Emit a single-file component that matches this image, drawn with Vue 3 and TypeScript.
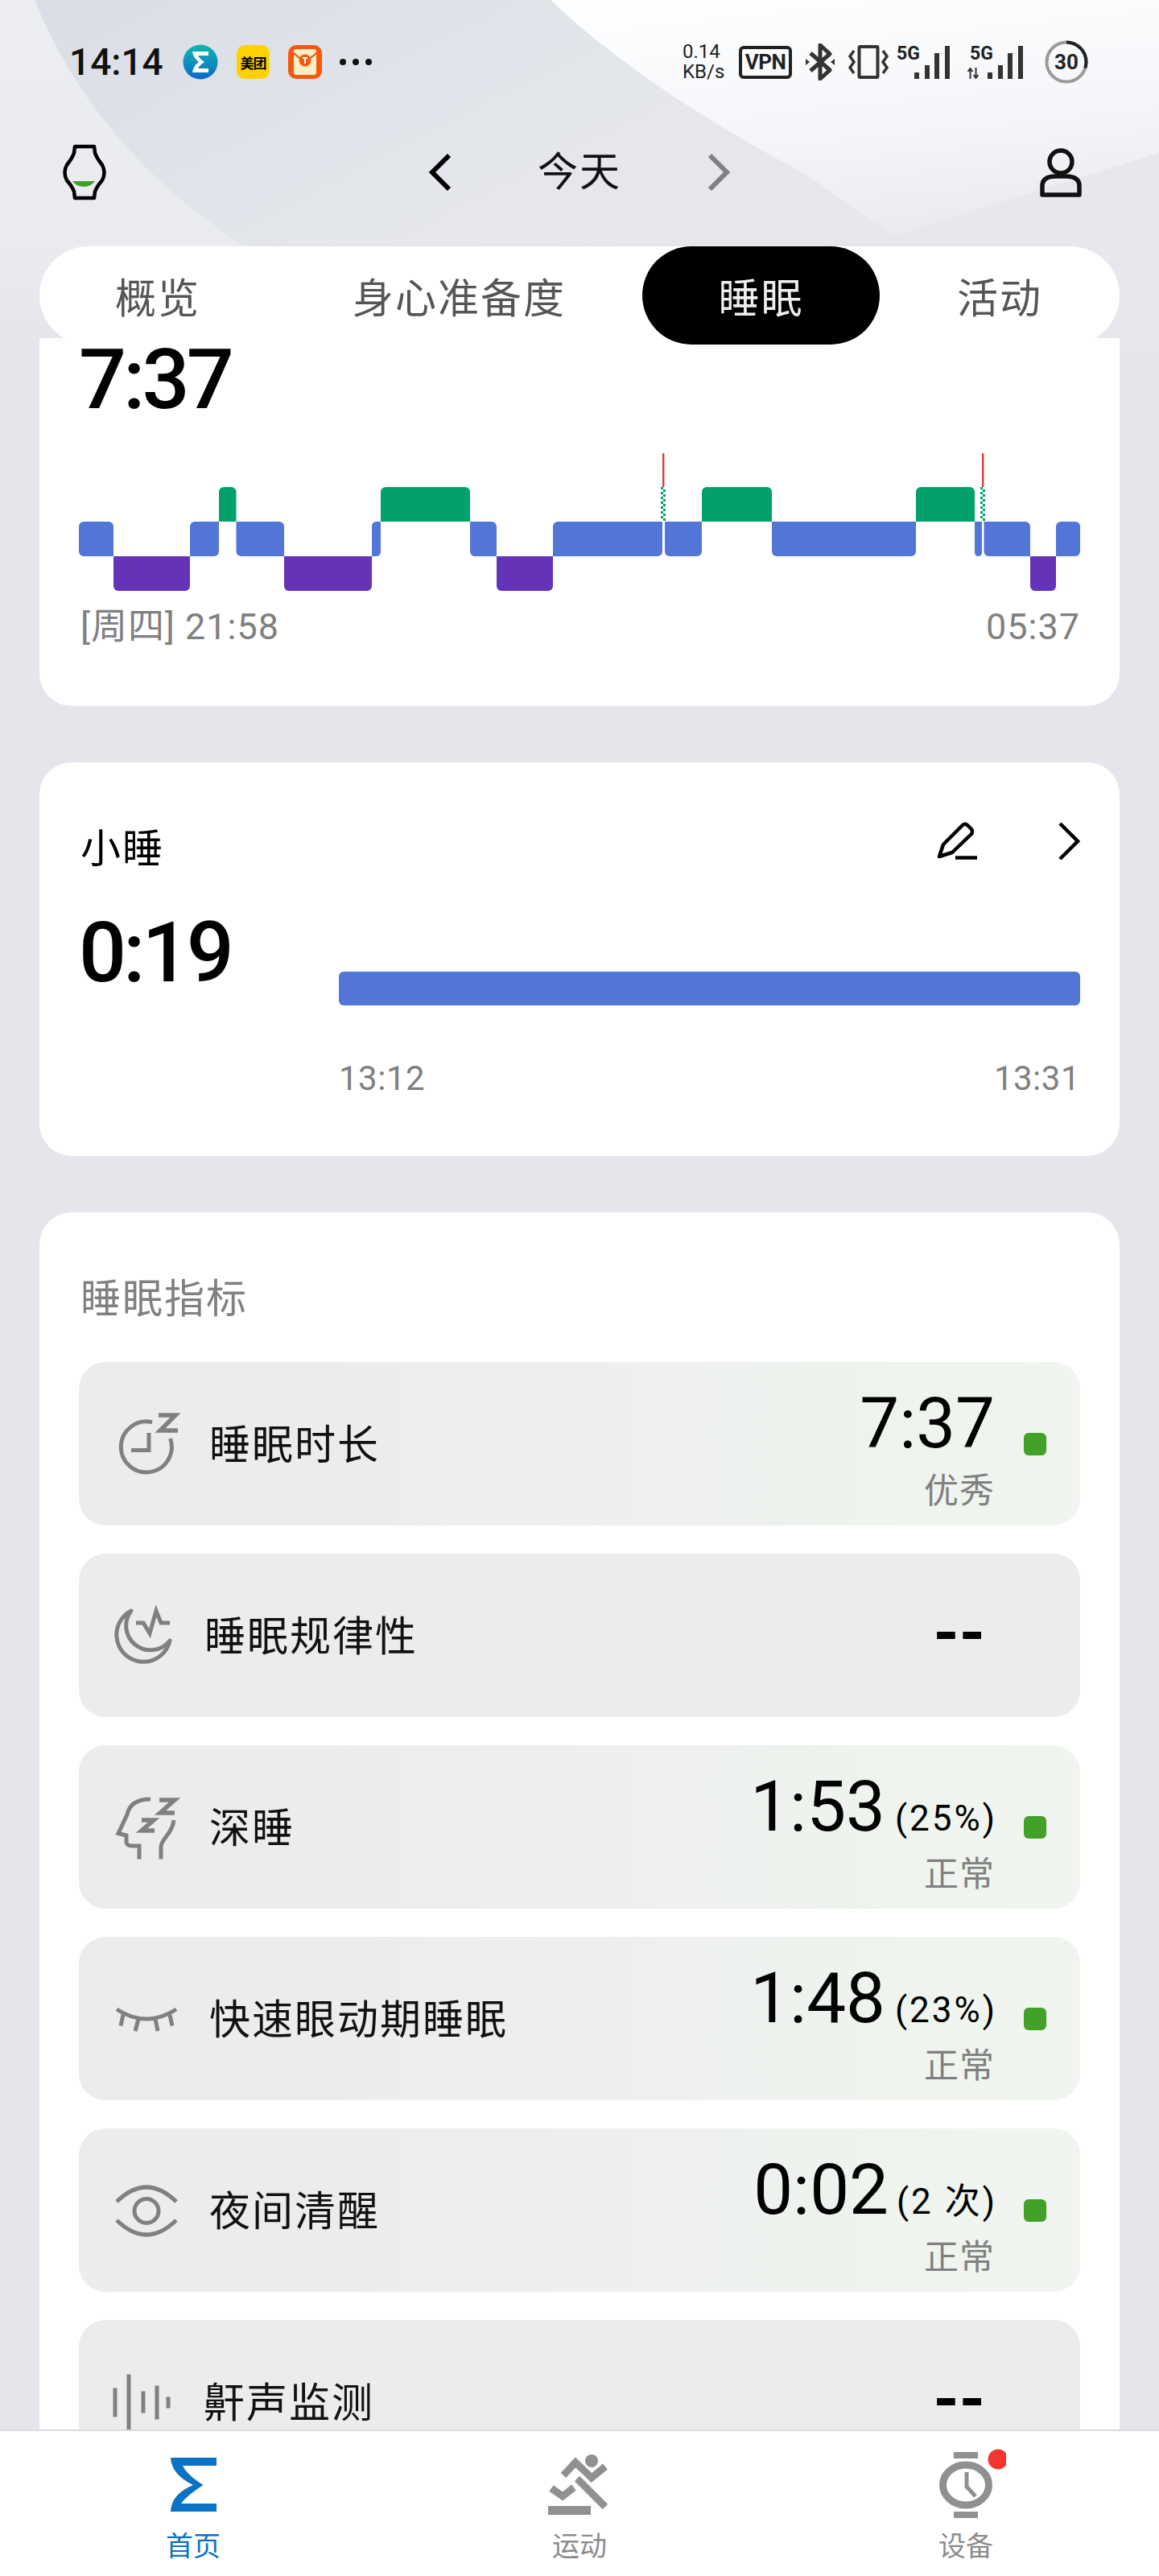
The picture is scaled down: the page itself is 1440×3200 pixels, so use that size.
<template>
  <div class="page">
    <!-- wallpaper behind the header -->
    <svg class="wallpaper" width="1440" height="440" viewBox="0 0 1440 440">
      <defs>
        <linearGradient id="midBg" x1="0" y1="0" x2="1" y2="0.6">
          <stop offset="0" stop-color="#d9dde5" />
          <stop offset="0.55" stop-color="#e5e7ec" />
          <stop offset="1" stop-color="#e6e8ed" />
        </linearGradient>
        <linearGradient id="leftBg" x1="0" y1="0" x2="0" y2="1">
          <stop offset="0" stop-color="#eceef2" />
          <stop offset="0.7" stop-color="#e9ebef" />
          <stop offset="1" stop-color="#e3e5ea" />
        </linearGradient>
        <linearGradient id="rightBg" x1="0.3" y1="0" x2="0.55" y2="1">
          <stop offset="0" stop-color="#fdfeff" />
          <stop offset="0.6" stop-color="#f4f5f8" />
          <stop offset="1" stop-color="#e9ebf0" />
        </linearGradient>
      </defs>
      <rect width="1440" height="440" fill="url(#midBg)" />
      <path d="M0 0H43Q120 190 310 310V440H0Z" fill="url(#leftBg)" />
      <path d="M684 0Q800 110 1000 216L1110 293L1440 190V0Z" fill="url(#rightBg)" />
      <path d="M1110 293L1440 190V440H900Z" fill="#e6e8ee" />
    </svg>

    <div class="status-bar">
      <div class="status-left">
        <span class="clock">14:14</span>
        <svg class="app-icon" width="44" height="44" viewBox="0 0 44 44">
          <defs>
            <linearGradient id="sigmaBg" x1="0" y1="0" x2="0" y2="1">
              <stop offset="0" stop-color="#0fb8ad" />
              <stop offset="1" stop-color="#0b69c9" />
            </linearGradient>
          </defs>
          <circle cx="22" cy="22" r="21.5" fill="url(#sigmaBg)" />
          <path d="M12 9H32V14H19Q21 18 27 22Q21 26 19 30H32V35H12Q13 27 20 22Q13 17 12 9Z" fill="#fff" />
        </svg>
        <div class="meituan">美团</div>
        <svg class="app-icon" width="42" height="42" viewBox="0 0 42 42">
          <rect width="42" height="42" rx="10" fill="#f4590c" />
          <rect x="7" y="5" width="28" height="32" rx="3" fill="#fdeec4" />
          <path d="M7 10L21 22L35 10" fill="none" stroke="#e8481a" stroke-width="2" />
          <circle cx="21" cy="19" r="7.5" fill="#f4590c" />
          <path d="M18 16H24M21 16V23" stroke="#fff" stroke-width="2" />
        </svg>
        <svg width="42" height="10" viewBox="0 0 42 10">
          <circle cx="5" cy="5" r="4" fill="#111" />
          <circle cx="21" cy="5" r="4" fill="#111" />
          <circle cx="37" cy="5" r="4" fill="#111" />
        </svg>
      </div>
      <div class="status-right">
        <div class="speed"><span>0.14</span><span>KB/s</span></div>
        <div class="vpn">VPN</div>
        <svg width="36" height="46" viewBox="0 0 36 46">
          <path d="M6 12L30 33L18 44V2L30 13L6 34" fill="none" stroke="#333" stroke-width="5" stroke-linejoin="round" />
          <path d="M0 19L5 23L0 27ZM36 19L31 23L36 27Z" fill="#333" />
        </svg>
        <svg width="50" height="42" viewBox="0 0 50 42">
          <rect x="13.5" y="2" width="23" height="38" rx="1" fill="none" stroke="#333" stroke-width="4" />
          <path d="M7 7L2 14L7 21L2 28L7 35M43 7L48 14L43 21L48 28L43 35" fill="none" stroke="#333" stroke-width="3.5" />
        </svg>
        <div class="signal">
          <span class="net">5G</span>
          <span v-for="b in signalBars" :key="b.x" class="bar" :style="{ left: b.x + 'px', height: b.h + 'px' }"></span>
        </div>
        <div class="signal signal-two">
          <svg class="arrows" width="14" height="14" viewBox="0 0 14 14">
            <path d="M3.5 14V2M0.5 5L3.5 1L6.5 5M10.5 0V12M7.5 9L10.5 13L13.5 9" fill="none" stroke="#333" stroke-width="2" />
          </svg>
          <span class="net">5G</span>
          <span v-for="b in signalBars" :key="b.x" class="bar" :style="{ left: b.x + 'px', height: b.h + 'px' }"></span>
        </div>
        <div class="battery">
          <svg width="54" height="54" viewBox="0 0 54 54">
            <circle cx="27" cy="27" r="24.5" fill="none" stroke="#9a9a9a" stroke-width="4" />
            <circle cx="27" cy="27" r="24.5" fill="none" stroke="#222" stroke-width="4" pathLength="100" stroke-dasharray="30 70" transform="rotate(-90 27 27)" />
          </svg>
          <span>30</span>
        </div>
      </div>
    </div>

    <div class="top-nav">
      <svg class="watch" width="56" height="70" viewBox="0 0 56 70">
        <path d="M16 3H40L41 11Q43 17 50 26Q55 35 50 45Q43 53 41 59L40 67H16L15 59Q13 53 6 45Q1 35 6 26Q13 17 15 11Z" fill="none" stroke="#000" stroke-width="4.5" stroke-linejoin="round" />
        <path d="M13 46H41Q36 53 27 53Q18 53 13 46Z" fill="#41a128" />
      </svg>
      <div class="date-nav">
        <svg width="30" height="50" viewBox="0 0 30 50">
          <path d="M26 4L5 25L26 46" fill="none" stroke="#000" stroke-width="6" />
        </svg>
        <span class="date">今天</span>
        <svg width="30" height="50" viewBox="0 0 30 50">
          <path d="M4 4L25 25L4 46" fill="none" stroke="#808080" stroke-width="6" />
        </svg>
      </div>
      <svg class="person" width="56" height="66" viewBox="0 0 56 66">
        <circle cx="28" cy="20" r="14" fill="none" stroke="#111" stroke-width="5.5" />
        <path d="M5 61V50Q5 38 22 38H34Q51 38 51 50V61Z" fill="none" stroke="#111" stroke-width="5.5" stroke-linejoin="round" />
      </svg>
    </div>

    <div class="tabs">
      <div v-for="t in tabs" :key="t" class="tab" :class="{ active: t === '睡眠' }">{{ t }}</div>
    </div>

    <div class="scroller">
      <section class="card night-card">
        <div class="big-time">7:37</div>
        <svg class="chart" width="1244" height="171" viewBox="98 563 1244 171">
          <path v-for="(s, i) in chartPaths" :key="i" :d="s.d" :fill="s.fill" />
          <g v-for="m in markers" :key="m">
            <rect :x="m - 1" y="563" width="2.4" height="42" fill="#d2403c" />
            <rect v-for="(c, j) in checker" :key="j" :x="m - 3 + c.col * 3" :y="c.y" width="3" height="3" fill="#02a16b" />
          </g>
        </svg>
        <div class="time-labels">
          <span>[周四] 21:58</span>
          <span>05:37</span>
        </div>
      </section>

      <section class="card nap-card">
        <div class="nap-head">
          <span class="nap-title">小睡</span>
          <svg class="pencil" width="52" height="50" viewBox="0 0 52 50">
            <path d="M4 44L9 29L33 5Q36 2.500 39 5L44 10Q46 13 44 16L20 39Z" fill="none" stroke="#000" stroke-width="4.500" stroke-linejoin="round" />
            <path d="M24 45.500H51" stroke="#000" stroke-width="4.500" />
          </svg>
          <svg width="27" height="50" viewBox="0 0 27 50">
            <path d="M2 3L24 25L2 47" fill="none" stroke="#000" stroke-width="4.500" />
          </svg>
        </div>
        <div class="nap-body">
          <div class="big-time nap-time">0:19</div>
          <div class="nap-right">
            <div class="nap-bar"></div>
            <div class="time-labels nap-labels">
              <span>13:12</span>
              <span>13:31</span>
            </div>
          </div>
        </div>
      </section>

      <section class="card metrics-card">
        <div class="metrics-title">睡眠指标</div>
        <div class="metric-list">
          <div v-for="m in metrics" :key="m.label" class="metric" :class="{ rated: m.value }">
            <svg class="metric-icon" width="80" height="80" viewBox="0 0 80 80">
              <g fill="none" stroke="#808080" stroke-width="5">
                <template v-if="m.icon === 'clock'">
                  <path d="M49 12.800A31.500 31.500 0 1 0 71.500 33" />
                  <path d="M45 26V47.500H23" />
                  <path d="M57 4H78L59 23H81" stroke-width="5.500" />
                </template>
                <template v-else-if="m.icon === 'moon'">
                  <path d="M23 9A33.500 33.500 0 1 0 71 46A30 30 0 0 1 23 9Z" stroke-linejoin="round" />
                  <path d="M29 24H38L46 37L54 9L60 24H71" />
                </template>
                <template v-else-if="m.icon === 'head'">
                  <path d="M47 5C33 5 21 10 18 24L7 47.500L17 50V59Q18 63 24 63H33V79.500" />
                  <path d="M60 79.500V64Q60 60 66 52Q75 41 76 31" />
                  <path d="M58 6H77L59 22H77" stroke-width="5.500" />
                  <path d="M36 31H51L36 44H52" stroke-width="5.500" />
                </template>
                <template v-else-if="m.icon === 'eyeClosed'">
                  <path d="M5 28Q42 52 79 28" />
                  <path d="M13 35L10 48.500M32 40L28 55M53 40L56 55M71 35L74 48.500" />
                </template>
                <template v-else-if="m.icon === 'eye'">
                  <path d="M5 29Q42 -7 79 29" />
                  <path d="M5 52Q42 88 79 52" />
                  <circle cx="42" cy="40.500" r="15" />
                </template>
                <template v-else>
                  <path d="M3 22.500V58.500M20 5.500V74.500M38 26.500V53.500M55 19.500V61.500M69 33.500V47.500" />
                </template>
              </g>
            </svg>
            <span class="metric-label" :style="{ marginLeft: m.gap + 'px' }">{{ m.label }}</span>
            <template v-if="m.value">
              <div class="metric-value">
                <div class="value-line">
                  <span class="value-main" :style="{ marginRight: m.extraGap + 'px' }">{{ m.value }}</span>
                  <span v-if="m.extra" class="value-extra">{{ m.extra }}</span>
                </div>
                <div class="value-rate">{{ m.rate }}</div>
              </div>
              <span class="rate-dot"></span>
            </template>
            <span v-else class="no-value">--</span>
          </div>
        </div>
      </section>
    </div>

    <nav class="bottom-nav">
      <div class="nav-item active">
        <svg width="100" height="90" viewBox="0 0 100 90">
          <path d="M22 11H79V21H37Q42 32 62.500 45Q42 58 35 68H79V78H22Q23 56 50 45Q23 32 22 11Z" fill="#0b72c4" />
        </svg>
        <span>首页</span>
      </div>
      <div class="nav-item">
        <svg width="100" height="90" viewBox="0 0 100 90">
          <circle cx="65" cy="15" r="8" fill="#909090" />
          <g fill="none" stroke="#909090" stroke-width="9">
            <path d="M30 33L45 17L65 36L82 22" />
            <path d="M15 49L29 59L43 48" />
            <path d="M47 37L82 72" />
          </g>
          <rect x="11" y="71" width="53" height="11" fill="#909090" />
        </svg>
        <span>运动</span>
      </div>
      <div class="nav-item">
        <svg width="100" height="90" viewBox="0 0 100 90">
          <rect x="35" y="4" width="30" height="8" fill="#909090" />
          <rect x="35" y="78" width="30" height="8" fill="#909090" />
          <ellipse cx="50" cy="45" rx="28.500" ry="25" fill="none" stroke="#909090" stroke-width="9" />
          <path d="M51 29V47L62 59" fill="none" stroke="#909090" stroke-width="5" />
          <ellipse cx="90" cy="13" rx="12.500" ry="12.500" fill="#f43530" />
        </svg>
        <span>设备</span>
      </div>
    </nav>
  </div>
</template>

<script setup lang="ts">
import { computed } from 'vue';

type Level = 0 | 1 | 2;

interface Segment {
  x0: number;
  x1: number;
  level: Level;
}

interface Metric {
  label: string;
  icon: string;
  gap: number;
  value?: string;
  extra?: string;
  extraGap?: number;
  rate?: string;
}

const tabs = ['概览', '身心准备度', '睡眠', '活动'];

const signalBars = [
  { x: 22, h: 8 },
  { x: 35, h: 17 },
  { x: 47, h: 32 },
  { x: 60, h: 41 }
];

// Level 0 = REM (green), 1 = light (blue), 2 = deep (purple). Zero width entries are the wake markers.
const segments: Segment[] = [
  { x0: 98, x1: 141, level: 1 },
  { x0: 141, x1: 236, level: 2 },
  { x0: 236, x1: 272, level: 1 },
  { x0: 272, x1: 293.5, level: 0 },
  { x0: 293.5, x1: 353, level: 1 },
  { x0: 353, x1: 462, level: 2 },
  { x0: 462, x1: 473, level: 1 },
  { x0: 473, x1: 584, level: 0 },
  { x0: 584, x1: 617, level: 1 },
  { x0: 617, x1: 687, level: 2 },
  { x0: 687, x1: 823, level: 1 },
  { x0: 824, x1: 824, level: 0 },
  { x0: 826, x1: 872, level: 1 },
  { x0: 872, x1: 959, level: 0 },
  { x0: 959, x1: 1138, level: 1 },
  { x0: 1138, x1: 1211, level: 0 },
  { x0: 1211, x1: 1220, level: 1 },
  { x0: 1221, x1: 1221, level: 0 },
  { x0: 1222.5, x1: 1280, level: 1 },
  { x0: 1280, x1: 1312, level: 2 },
  { x0: 1312, x1: 1342, level: 1 }
];

const levelColors = ['#02a16b', '#5275d8', '#6533b8'];
const markers = [824, 1221];

const checker = computed(() => {
  const cells: Array<{ col: number; y: number }> = [];
  for (let i = 0; i < 14; i++) {
    cells.push({ col: i % 2, y: 605 + i * 3 });
  }
  return cells;
});

const roundedPath = (s: Segment, tl: boolean, tr: boolean, br: boolean, bl: boolean) => {
  const top = 605 + s.level * 43;
  const bottom = top + 43;
  const r = Math.min(6, (s.x1 - s.x0) / 2);
  const a = (on: boolean, x: number, y: number) => (on ? `A${r} ${r} 0 0 1 ${x} ${y}` : `L${x} ${y}`);
  return [
    `M${s.x0 + (tl ? r : 0)} ${top}`,
    `L${s.x1 - (tr ? r : 0)} ${top}`,
    tr ? a(true, s.x1, top + r) : '',
    `L${s.x1} ${bottom - (br ? r : 0)}`,
    br ? a(true, s.x1 - r, bottom) : '',
    `L${s.x0 + (bl ? r : 0)} ${bottom}`,
    bl ? a(true, s.x0, bottom - r) : '',
    `L${s.x0} ${top + (tl ? r : 0)}`,
    tl ? a(true, s.x0 + r, top) : '',
    'Z'
  ].join('');
};

const chartPaths = computed(() =>
  segments
    .map((s, i) => {
      const prev = segments[i - 1];
      const next = segments[i + 1];
      // a corner stays square where a neighbour of another level touches it
      const tl = !(prev && prev.level < s.level);
      const bl = !(prev && prev.level > s.level);
      const tr = !(next && next.level < s.level);
      const br = !(next && next.level > s.level);
      return { s, d: roundedPath(s, tl, tr, br, bl), fill: levelColors[s.level] };
    })
    .filter(p => p.s.x1 > p.s.x0)
);

const metrics: Metric[] = [
  { label: '睡眠时长', icon: 'clock', gap: 40, value: '7:37', rate: '优秀' },
  { label: '睡眠规律性', icon: 'moon', gap: 34 },
  { label: '深睡', icon: 'head', gap: 40, value: '1:53', extra: '(25%)', extraGap: 12, rate: '正常' },
  { label: '快速眼动期睡眠', icon: 'eyeClosed', gap: 40, value: '1:48', extra: '(23%)', extraGap: 12, rate: '正常' },
  { label: '夜间清醒', icon: 'eye', gap: 40, value: '0:02', extra: '(2 次)', extraGap: 10, rate: '正常' },
  { label: '鼾声监测', icon: 'bars', gap: 33 }
];
</script>

<style>
html,
body {
  margin: 0;
  background: #e4e6ec;
}
</style>

<style scoped>
.page {
  position: relative;
  width: 1440px;
  height: 3200px;
  display: flex;
  flex-direction: column;
  overflow: hidden;
  background: #e4e6ec;
  font-family: Roboto, "Noto Sans CJK SC", sans-serif;
  color: #000;
}

.wallpaper {
  position: absolute;
  top: 0;
  left: 0;
}

.status-bar {
  position: relative;
  height: 154px;
  flex: none;
  display: flex;
  align-items: center;
  justify-content: space-between;
  padding: 0 88px 0 86px;
}

.status-left {
  display: flex;
  align-items: center;
}

.clock {
  width: 141px;
  font-size: 46px;
  font-weight: 500;
  color: #111;
}

.app-icon {
  display: block;
}

.meituan {
  width: 41px;
  height: 42px;
  margin: 0 23px;
  display: flex;
  align-items: center;
  justify-content: center;
  border-radius: 10px;
  background: #ffd100;
  font-size: 17px;
  letter-spacing: -1px;
  font-weight: 700;
  white-space: nowrap;
  overflow: hidden;
}

.status-left svg:last-child {
  margin-left: 21px;
}

.status-right {
  display: flex;
  align-items: center;
}

.speed {
  width: 53px;
  display: flex;
  flex-direction: column;
  font-size: 24px;
  line-height: 25px;
  color: #222;
  white-space: nowrap;
}

.vpn {
  width: 66px;
  height: 41px;
  margin: 0 17px 0 17px;
  box-sizing: border-box;
  border: 4px solid #222;
  border-radius: 6px;
  display: flex;
  align-items: center;
  justify-content: center;
  font-size: 26px;
  font-weight: 700;
  letter-spacing: -0.5px;
  color: #222;
}

.status-right > svg:nth-of-type(2) {
  margin: 0 10px 0 17px;
}

.signal {
  position: relative;
  width: 72px;
  height: 44px;
}

.signal-two {
  width: 75px;
  margin-left: 16px;
}

.net {
  position: absolute;
  left: 0;
  top: -2px;
  font-size: 23px;
  font-weight: 700;
  color: #222;
}

.signal-two .net {
  left: 3px;
}

.signal-two .bar {
  margin-left: 3px;
}

.arrows {
  position: absolute;
  left: 0;
  bottom: 1px;
}

.bar {
  position: absolute;
  bottom: 1px;
  width: 6px;
  background: #333;
}

.battery {
  position: relative;
  width: 54px;
  height: 54px;
  margin-left: 21px;
  display: flex;
  align-items: center;
  justify-content: center;
  font-size: 26px;
  font-weight: 700;
  color: #222;
}

.battery svg {
  position: absolute;
  top: 0;
  left: 0;
}

.top-nav {
  position: relative;
  height: 120px;
  flex: none;
  display: grid;
  grid-template-columns: 455px 376px 1fr;
  align-items: center;
  padding: 0 94px 0 77px;
}

.date-nav {
  display: flex;
  align-items: center;
  justify-content: space-between;
}

.date {
  font-size: 50px;
  line-height: 60px;
  letter-spacing: 2px;
  color: #111;
}

.person {
  justify-self: end;
}

.tabs {
  position: relative;
  z-index: 2;
  flex: none;
  width: 1342px;
  height: 122px;
  margin: 32px 0 -28px 49px;
  display: grid;
  grid-template-columns: 294px 455px 295px 298px;
  border-radius: 61px;
  background: #fff;
}

.tab {
  display: flex;
  align-items: center;
  justify-content: center;
  border-radius: 61px;
  font-size: 51px;
  letter-spacing: 2px;
  color: #555;
}

.tab.active {
  background: #000;
  color: #eee;
}

.scroller {
  position: relative;
  flex: 1;
  min-height: 0;
  overflow: hidden;
  padding: 20px 49px 0;
}

.card {
  background: #fff;
  border-radius: 40px;
  padding: 0 49px;
  margin-bottom: 70px;
}

.night-card {
  border-radius: 0 0 40px 40px;
  padding-bottom: 73px;
}

.big-time {
  height: 104px;
  font-size: 104px;
  line-height: 104px;
  font-weight: 500;
  letter-spacing: -4px;
  color: #000;
}

.chart {
  display: block;
  margin-top: 39px;
}

.time-labels {
  display: flex;
  justify-content: space-between;
  margin-top: 20px;
  padding-left: 2px;
  font-size: 45px;
  line-height: 50px;
  letter-spacing: 1px;
  color: #808080;
}

.nap-card {
  padding-top: 78px;
  padding-bottom: 71px;
}

.nap-head {
  display: flex;
  align-items: center;
  height: 60px;
}

.nap-title {
  padding-left: 2px;
  font-size: 50px;
  line-height: 60px;
  letter-spacing: 2px;
  margin-right: auto;
}

.pencil {
  margin: -20px 100px 0 0;
}

.nap-head svg:last-child {
  margin-top: -20px;
}

.nap-body {
  display: flex;
  margin-top: 47px;
  height: 233px;
}

.nap-time {
  width: 323px;
  flex: none;
}

.nap-right {
  flex: 1;
  padding-top: 75px;
}

.nap-bar {
  height: 42px;
  border-radius: 6px;
  background: #5275d8;
}

.nap-labels {
  margin-top: 66px;
  padding-left: 0;
  font-size: 42px;
  letter-spacing: 0.5px;
}

.metrics-card {
  padding-top: 78px;
  padding-bottom: 60px;
}

.metrics-title {
  padding-left: 2px;
  font-size: 50px;
  line-height: 60px;
  letter-spacing: 2px;
  color: #808080;
}

.metric-list {
  display: flex;
  flex-direction: column;
  gap: 35px;
  margin-top: 48px;
}

.metric {
  height: 203px;
  flex: none;
  display: flex;
  align-items: center;
  padding: 0 42px;
  border-radius: 33px;
  background: #ececec;
}

.metric.rated {
  background: linear-gradient(90deg, #ececec 25%, #f0f6ef 100%);
}

.metric-icon {
  flex: none;
  overflow: visible;
}

.metric-label {
  padding-top: 5px;
  font-size: 51px;
  line-height: 60px;
  letter-spacing: 2px;
  color: #111;
}

.metric-value {
  margin-left: auto;
  height: 203px;
  box-sizing: border-box;
  padding-top: 33px;
  display: flex;
  flex-direction: column;
  align-items: flex-end;
}

.value-line {
  display: flex;
  align-items: baseline;
  height: 86px;
}

.value-main {
  font-size: 87px;
  line-height: 86px;
}

.value-extra {
  font-size: 44px;
  letter-spacing: 3px;
  margin-right: -3px;
}

.value-rate {
  margin-top: 16px;
  font-size: 43px;
  line-height: 50px;
  letter-spacing: 1px;
  color: #808080;
}

.rate-dot {
  width: 28px;
  height: 28px;
  flex: none;
  margin-left: 36px;
  border-radius: 6px;
  background: #41a128;
}

.no-value {
  margin-left: auto;
  margin-right: 76px;
  margin-bottom: 8px;
  font-size: 82px;
  line-height: 84px;
  font-weight: 700;
  color: #000;
}

.bottom-nav {
  position: relative;
  z-index: 2;
  height: 182px;
  flex: none;
  box-sizing: border-box;
  display: grid;
  grid-template-columns: repeat(3, 1fr);
  padding-top: 22px;
  border-top: 2px solid #dcdcdc;
  background: #fff;
}

.nav-item {
  display: flex;
  flex-direction: column;
  align-items: center;
  font-size: 34px;
  line-height: 34px;
  color: #8c8c8c;
}

.nav-item svg {
  display: block;
  margin-bottom: 14px;
}

.nav-item.active {
  color: #0b72c4;
}
</style>
